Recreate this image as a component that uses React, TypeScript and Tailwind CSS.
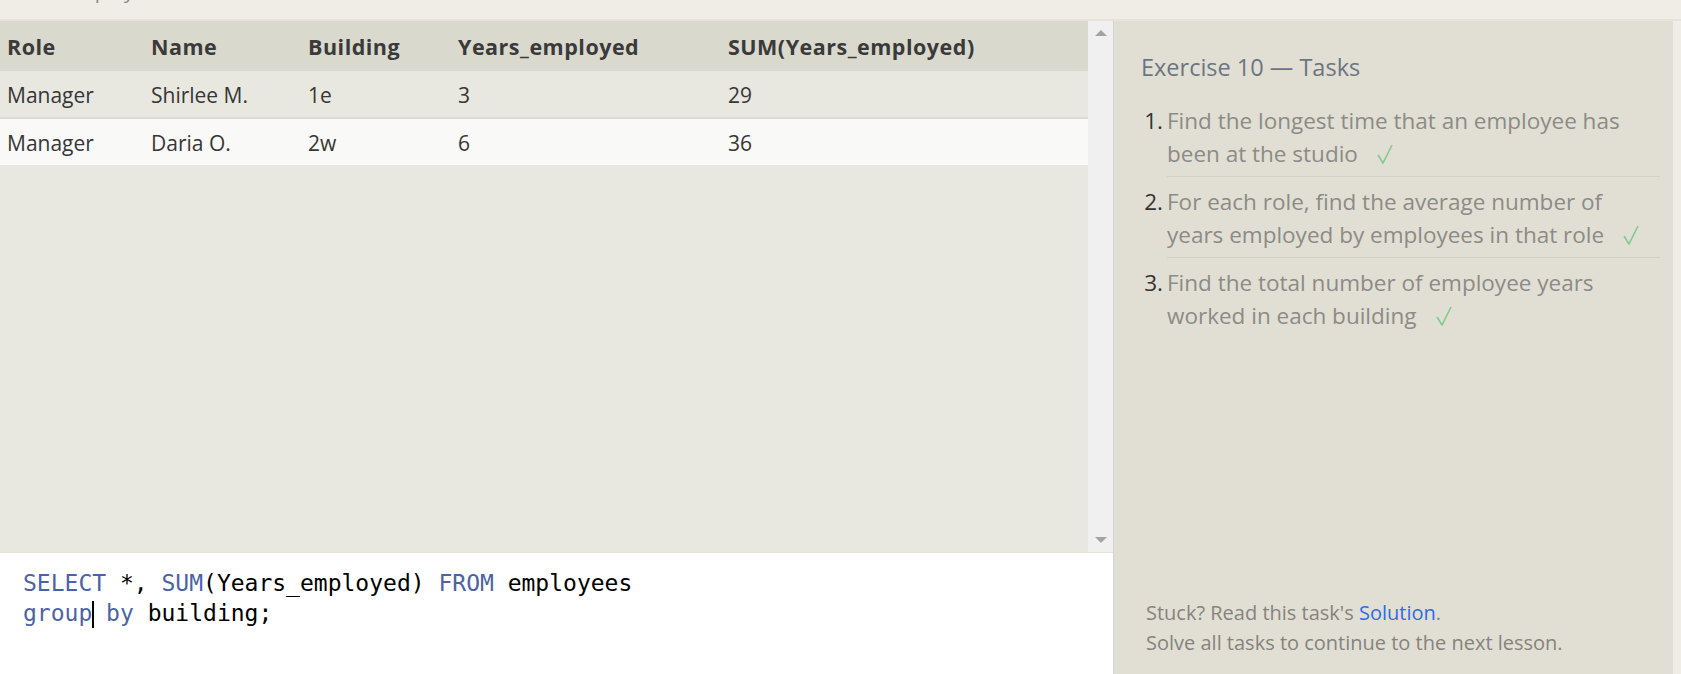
import React from "react";

const sans = { fontFamily: '"Open Sans", "Noto Sans", sans-serif' } as const;
const mono = { fontFamily: '"DejaVu Sans Mono", "Liberation Mono", monospace' } as const;

const cols = "grid grid-cols-[144px_157px_150px_270px_1fr]";

function Row({ cells, className }: { cells: string[]; className: string }) {
  return (
    <div className={`${cols} items-center ${className}`}>
      {cells.map((c, i) => (
        <div key={i} className="pl-[7px] whitespace-nowrap">
          {c}
        </div>
      ))}
    </div>
  );
}

function Check() {
  return (
    <svg className="inline-block ml-[19px] align-[-2px]" width="16" height="20" viewBox="0 0 16 20">
      <path d="M1 11 L6 19 L15 1" fill="none" stroke="#7fcb8b" strokeWidth="1.6" />
    </svg>
  );
}

function Task({ n, lines, last }: { n: number; lines: React.ReactNode[]; last?: boolean }) {
  return (
    <li className="flex">
      <div className="w-[22px] mr-[4px] text-right text-[#333] pt-[8px]">{n}.</div>
      <div className={`flex-1 pt-[8px] pb-[6px] ${last ? "" : "border-b border-[#d3d1c6]"}`}>
        {lines.map((l, i) => (
          <div key={i} className="whitespace-nowrap">
            {l}
          </div>
        ))}
      </div>
    </li>
  );
}

export default function App() {
  return (
    <div className="w-[1681px] h-[674px] bg-[#efede6] flex flex-col overflow-hidden" style={sans}>
      <div className="h-[19px] overflow-hidden pl-[65px] shrink-0">
        <div className="-mt-[23px] text-[20px] leading-[28px] text-[#8a8a8a]">employees</div>
      </div>
      <div className="flex flex-1 min-h-0 border-t-2 border-[#e5e3dc]">
        <div className="w-[1113px] flex flex-col">
          <div className="flex h-[531px]">
            <div className="w-[1088px] bg-[#e9e8e0] text-[21px] text-[#363636]">
              <Row cells={["Role", "Name", "Building", "Years_employed", "SUM(Years_employed)"]} className="h-[50px] pt-[2px] bg-[#dad9cd] font-bold text-[21.5px] tracking-[0.5px] text-[#3a3a3a]" />
              <Row cells={["Manager", "Shirlee M.", "1e", "3", "29"]} className="h-[48px] pt-[3px] bg-[#e9e8e0] border-b-2 border-[#dcdbd5]" />
              <Row cells={["Manager", "Daria O.", "2w", "6", "36"]} className="h-[46px] pt-[4px] bg-[#f9f9f8]" />
            </div>
            <div className="w-[25px] bg-[#f0f0f0] flex flex-col items-center justify-between py-[9px]">
              <svg width="12" height="6" viewBox="0 0 12 6">
                <path d="M0 6 L6 0 L12 6 Z" fill="#a3a3a3" />
              </svg>
              <svg width="12" height="6" viewBox="0 0 12 6">
                <path d="M0 0 L12 0 L6 6 Z" fill="#a3a3a3" />
              </svg>
            </div>
          </div>
          <div className="flex-1 bg-white border-t border-[#e4e3dd] pt-[15px] pl-[23px] text-[23px] leading-[30px] text-black" style={mono}>
            <div className="whitespace-pre">
              <span className="text-[#4b63a6]">SELECT</span> *, <span className="text-[#4b63a6]">SUM</span>(Years_employed) <span className="text-[#4b63a6]">FROM</span> employees
            </div>
            <div className="whitespace-pre">
              <span className="text-[#4b63a6]">group</span>
              <span className="inline-block w-[2px] h-[27px] bg-black align-[-7px] -mr-[2px]" />
              {" "}
              <span className="text-[#4b63a6]">by</span> building;
            </div>
          </div>
        </div>
        <div className="w-[560px] bg-[#e1dfd4] border-l border-[#d6d4ca] flex flex-col pt-[30px] pl-[27px] pr-[13px] pb-[16px]">
          <div className="text-[23.5px] leading-[32px] text-[#6b7582]">Exercise 10 — Tasks</div>
          <ol className="mt-[13px] text-[22.5px] leading-[33px] text-[#8c8b86]">
            <Task n={1} lines={["Find the longest time that an employee has", <>been at the studio<Check /></>]} />
            <Task n={2} lines={["For each role, find the average number of", <>years employed by employees in that role<Check /></>]} />
            <Task n={3} last lines={["Find the total number of employee years", <>worked in each building<Check /></>]} />
          </ol>
          <div className="mt-auto pl-[5px] text-[20px] leading-[30px] text-[#86837d]">
            <div>
              Stuck? Read this task's <span className="text-[#2f6be3]">Solution</span>.
            </div>
            <div>Solve all tasks to continue to the next lesson.</div>
          </div>
        </div>
        <div className="flex-1 bg-[#efede6]" />
      </div>
    </div>
  );
}
